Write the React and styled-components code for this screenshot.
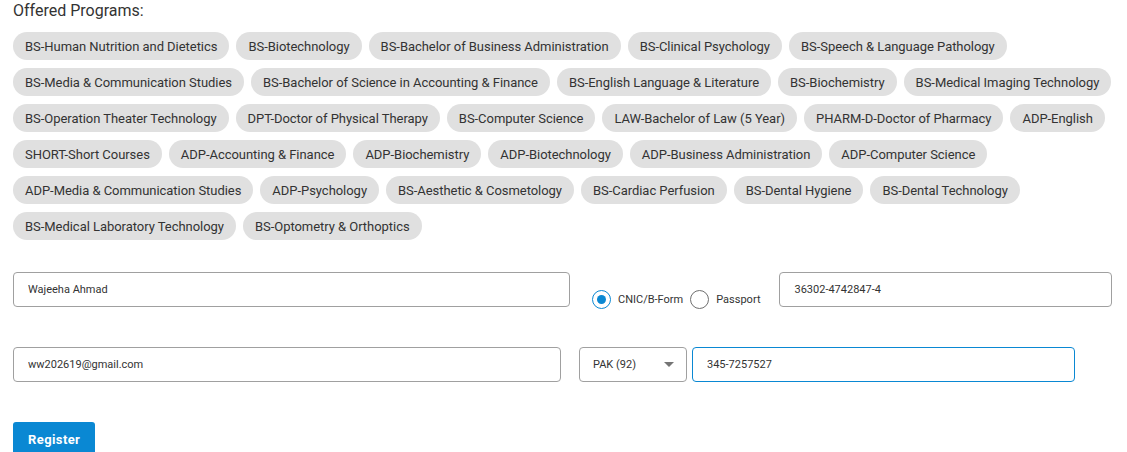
import React, { useState } from 'react'
import styled, { createGlobalStyle } from 'styled-components'

const GlobalStyle = createGlobalStyle`
  body {
    margin: 0;
    background: #fff;
    font-family: Roboto, 'Liberation Sans', sans-serif;
    color: #333;
  }
`

const Page = styled.div`
  padding: 0 4px 0 13px;
`

const Title = styled.h3`
  margin: 0;
  padding-top: 1px;
  font-size: 16px;
  line-height: 20px;
  font-weight: 400;
  color: #333;
`

const ChipList = styled.div`
  display: flex;
  flex-wrap: wrap;
  gap: 8px 7px;
  margin-top: 11px;
`

const Chip = styled.span`
  display: inline-flex;
  align-items: center;
  height: 28px;
  padding: 0 12px;
  border-radius: 14px;
  background: #e0e0e0;
  font-size: 13px;
  letter-spacing: -0.04px;
  color: #333;
  white-space: nowrap;
`

const Form = styled.div`
  display: flex;
  flex-direction: column;
  gap: 40px;
  margin-top: 32px;
`

const Row = styled.div`
  display: flex;
  align-items: flex-start;
`

const Input = styled.input`
  box-sizing: border-box;
  width: ${p => p.$width}px;
  height: 35px;
  margin-left: ${p => p.$gap || 0}px;
  padding: 0 14px;
  border: 1px solid ${p => (p.$focused ? '#0a88d3' : '#a0a0a0')};
  border-radius: 4px;
  font-family: inherit;
  font-size: 11px;
  color: #333;
  outline: none;
`

const RadioGroup = styled.div`
  box-sizing: border-box;
  display: flex;
  align-items: center;
  height: 35px;
  padding-top: 20px;
  margin: 0 19px 0 22px;
`

const RadioLabel = styled.label`
  display: flex;
  align-items: center;
  gap: 7px;
  margin-right: ${p => p.$spacing || 0}px;
  font-size: 11px;
  color: #333;
  cursor: pointer;
`

const RadioCircle = styled.span`
  box-sizing: border-box;
  width: 19px;
  height: 19px;
  border-radius: 50%;
  border: 1.5px solid ${p => (p.$checked ? '#0a88d3' : '#6f6f6f')};
  display: flex;
  align-items: center;
  justify-content: center;

  &::after {
    content: '';
    width: 9px;
    height: 9px;
    border-radius: 50%;
    background: ${p => (p.$checked ? '#0a88d3' : 'transparent')};
  }
`

const Select = styled.div`
  box-sizing: border-box;
  width: 108px;
  height: 35px;
  margin-left: 18px;
  padding: 0 12px 0 13px;
  border: 1px solid #a0a0a0;
  border-radius: 4px;
  display: flex;
  align-items: center;
  justify-content: space-between;
  font-size: 11px;
  color: #333;
`

const Caret = styled.span`
  width: 0;
  height: 0;
  border-left: 5px solid transparent;
  border-right: 5px solid transparent;
  border-top: 5px solid #757575;
`

const Button = styled.button`
  align-self: flex-start;
  height: 34px;
  padding: 0 15px;
  border: none;
  border-radius: 3px;
  background: #0a88d3;
  color: #fff;
  font-family: inherit;
  font-size: 13px;
  font-weight: 700;
  letter-spacing: 0.4px;
`

const programs = [
  'BS-Human Nutrition and Dietetics',
  'BS-Biotechnology',
  'BS-Bachelor of Business Administration',
  'BS-Clinical Psychology',
  'BS-Speech & Language Pathology',
  'BS-Media & Communication Studies',
  'BS-Bachelor of Science in Accounting & Finance',
  'BS-English Language & Literature',
  'BS-Biochemistry',
  'BS-Medical Imaging Technology',
  'BS-Operation Theater Technology',
  'DPT-Doctor of Physical Therapy',
  'BS-Computer Science',
  'LAW-Bachelor of Law (5 Year)',
  'PHARM-D-Doctor of Pharmacy',
  'ADP-English',
  'SHORT-Short Courses',
  'ADP-Accounting & Finance',
  'ADP-Biochemistry',
  'ADP-Biotechnology',
  'ADP-Business Administration',
  'ADP-Computer Science',
  'ADP-Media & Communication Studies',
  'ADP-Psychology',
  'BS-Aesthetic & Cosmetology',
  'BS-Cardiac Perfusion',
  'BS-Dental Hygiene',
  'BS-Dental Technology',
  'BS-Medical Laboratory Technology',
  'BS-Optometry & Orthoptics'
]

const App = () => {
  const [idType, setIdType] = useState('cnic')

  return (
    <Page>
      <GlobalStyle />
      <Title>Offered Programs:</Title>
      <ChipList>
        {programs.map(p => (
          <Chip key={p}>{p}</Chip>
        ))}
      </ChipList>
      <Form>
        <Row>
          <Input $width={557} defaultValue='Wajeeha Ahmad' />
          <RadioGroup>
            <RadioLabel $spacing={7} onClick={() => setIdType('cnic')}>
              <RadioCircle $checked={idType === 'cnic'} />
              CNIC/B-Form
            </RadioLabel>
            <RadioLabel onClick={() => setIdType('passport')}>
              <RadioCircle $checked={idType === 'passport'} />
              Passport
            </RadioLabel>
          </RadioGroup>
          <Input $width={333} defaultValue='36302-4742847-4' />
        </Row>
        <Row>
          <Input $width={548} defaultValue='ww202619@gmail.com' />
          <Select>
            PAK (92)
            <Caret />
          </Select>
          <Input $width={383} $gap={5} $focused defaultValue='345-7257527' />
        </Row>
        <Button>Register</Button>
      </Form>
    </Page>
  )
}

export default App
